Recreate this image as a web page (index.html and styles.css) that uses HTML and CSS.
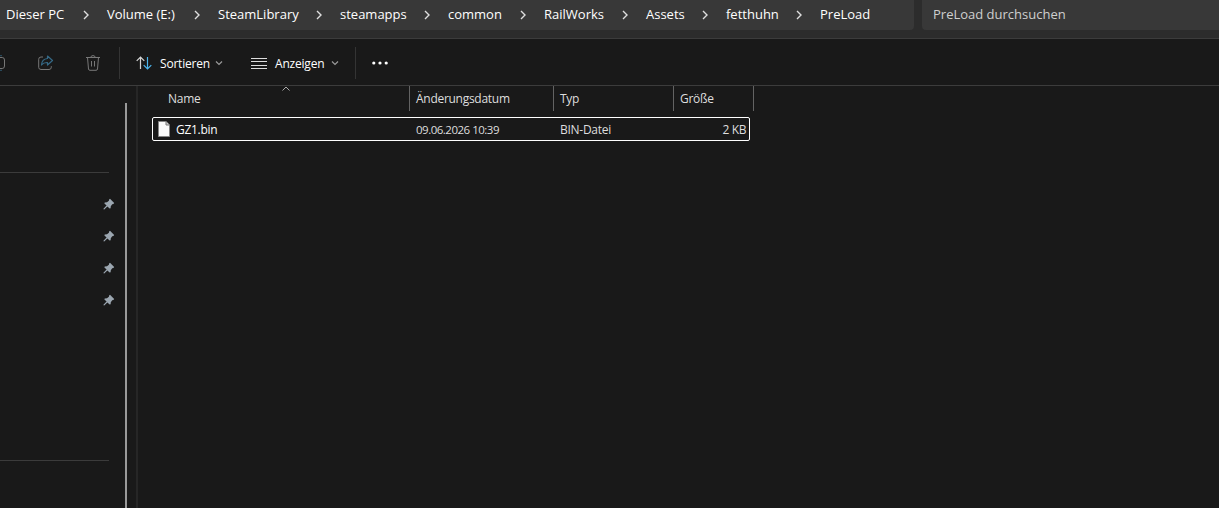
FILE: index.html
```html
<!DOCTYPE html>
<html lang="de">
<head>
<meta charset="utf-8">
<title>PreLoad</title>
<link rel="stylesheet" href="styles.css">
</head>
<body>
<svg width="0" height="0" class="defs">
  <symbol id="chev" viewBox="0 0 8 10"><path d="M2 1l4 4-4 4" fill="none" stroke="#dedede" stroke-width="1.4"/></symbol>
  <symbol id="down" viewBox="0 0 8 6"><path d="M1 1.5l3 3 3-3" fill="none" stroke="#9a9a9a" stroke-width="1.2"/></symbol>
  <symbol id="pin" viewBox="0 0 12 12"><path d="M7 .8L11.2 5 10.4 6 9.2 6.3 7.8 8.2 7.6 10.3 6.6 10.6 4.4 8.4 1.2 11.4.5 11.3.6 10.6 3.6 7.6 1.4 5.4 1.7 4.5 4 4.2 5.9 2.8 6.1 1.6z" fill="#9ba6b0"/></symbol>
</svg>
<div class="window">
  <header class="address">
    <nav class="crumbs">
      <span class="c1">Dieser PC</span><svg><use href="#chev"/></svg>
      <span class="c2">Volume (E:)</span><svg><use href="#chev"/></svg>
      <span class="c3">SteamLibrary</span><svg><use href="#chev"/></svg>
      <span class="c4">steamapps</span><svg><use href="#chev"/></svg>
      <span class="c5">common</span><svg><use href="#chev"/></svg>
      <span class="c6">RailWorks</span><svg><use href="#chev"/></svg>
      <span class="c7">Assets</span><svg><use href="#chev"/></svg>
      <span class="c8">fetthuhn</span><svg><use href="#chev"/></svg>
      <span class="c9">PreLoad</span>
    </nav>
    <div class="search"><span>PreLoad durchsuchen</span></div>
  </header>
  <div class="toolbar">
    <svg class="rename" width="6" height="16" viewBox="0 0 6 16" fill="none"><path d="M0 .7h2M0 15.3h2" stroke="#2d566c"/><path d="M0 2.5h2.2Q4.500 2.500 4.500 5v6q0 2.500-2.300 2.500H0" stroke="#777"/></svg>
    <svg class="share" width="16" height="16" viewBox="0 0 16 16" fill="none"><path d="M5 2H3Q.7 2 .7 4.300v8Q.7 14.500 3 14.500h8q2.300 0 2.300-2.300v-1" stroke="#777"/><path d="M9.500 1l5 4.500-5 4.500V7.500Q5.500 7.300 3.500 10 3.800 4 9.500 3.500z" stroke="#356986" stroke-width="1.200" stroke-linejoin="round"/></svg>
    <svg class="trash" width="16" height="16" viewBox="0 0 16 16" fill="none" stroke="#777"><path d="M1 2.500h14M5.800 2.500Q5.800.6 8 .6t2.200 1.900M2.500 2.500l1 11.500q.1 1.300 1.500 1.300h6q1.400 0 1.500-1.300l1-11.500M6.500 6v5.500M9.500 6v5.500"/></svg>
    <i class="sep"></i>
    <svg class="sort" width="16" height="14" viewBox="0 0 16 14" fill="none" stroke-width="1.200"><path d="M4.500 13V1M.7 4.800L4.500 1l3.800 3.800" stroke="#d5d5d5"/><path d="M11.500 1v12M7.700 9.200l3.800 3.800 3.800-3.800" stroke="#4cb5ed"/></svg>
    <span class="label l1">Sortieren</span><svg class="down"><use href="#down"/></svg>
    <svg class="lines" width="16" height="11" viewBox="0 0 16 11"><path d="M0 .5h16M0 3.500h16M0 7.500h16M0 10.500h16" stroke="#ddd"/></svg>
    <span class="label l2">Anzeigen</span><svg class="down"><use href="#down"/></svg>
    <i class="sep second"></i>
    <svg class="more" width="16" height="4" viewBox="0 0 16 4" fill="#fff"><circle cx="1.800" cy="2" r="1.600"/><circle cx="8" cy="2" r="1.600"/><circle cx="14.200" cy="2" r="1.600"/></svg>
  </div>
  <div class="content">
    <aside class="sidebar">
      <div class="tree">
        <hr>
        <div class="pins">
          <svg><use href="#pin"/></svg><svg><use href="#pin"/></svg><svg><use href="#pin"/></svg><svg><use href="#pin"/></svg>
        </div>
        <hr>
      </div>
      <div class="scroll"></div>
    </aside>
    <main class="files">
      <div class="row head">
        <div class="name"><span class="h1">Name</span><svg class="up" width="8" height="5" viewBox="0 0 8 5"><path d="M.5 4.500L4 1l3.500 3.500" fill="none" stroke="#aaa"/></svg></div>
        <div class="date"><span>Änderungsdatum</span></div>
        <div class="type"><span>Typ</span></div>
        <div class="size"><span>Größe</span></div>
      </div>
      <div class="row file">
        <div class="name"><svg class="doc" width="12" height="16" viewBox="0 0 12 16"><path d="M.5.5h7.500l3.500 3.500v11.500H.5z" fill="#fafafa" stroke="#858585"/><path d="M8 .5V4h3.500" fill="#ccc" stroke="#777"/></svg><span>GZ1.bin</span></div>
        <div class="date"><span class="stamp">09.06.2026 10:39</span></div>
        <div class="type"><span>BIN-Datei</span></div>
        <div class="size"><span class="kb">2 KB</span></div>
      </div>
    </main>
  </div>
</div>
</body>
</html>
```
FILE: styles.css
```css
* { box-sizing: border-box; }
body { margin: 0; background: #191919; color: #fff; font-family: "Open Sans", "Noto Sans", sans-serif; overflow: hidden; }
svg { display: block; flex: none; }
span { white-space: nowrap; }
.defs { position: absolute; }
.window { width: 1219px; height: 508px; display: flex; flex-direction: column; }
.address { height: 39px; flex: none; display: flex; gap: 8px; background: #2c2c2c; border-bottom: 1px solid #3c3c3c; }
.crumbs { width: 914px; height: 30px; padding-left: 6px; display: flex; align-items: center; background: #383838; border-radius: 0 0 4px 0; font-size: 13px; line-height: 28px; }
.crumbs span { flex: none; height: 30px; }
.crumbs svg { width: 8px; height: 10px; margin: 0 17px 1px 16px; }
.c1 { width: 60px; }
.c2 { width: 70px; }
.c3 { width: 81px; }
.c4 { width: 67px; }
.c5 { width: 55px; }
.c6 { width: 61px; }
.c7 { width: 39px; }
.c8 { width: 53px; }
.search { flex: 1; height: 30px; padding-left: 11px; background: #383838; border-radius: 0 0 0 4px; color: #cfcfcf; font-size: 13px; line-height: 28px; }
.toolbar { height: 47px; flex: none; display: flex; align-items: center; border-bottom: 1px solid #3c3c3c; padding-top: 2px; }
.share { margin-left: 32px; }
.trash { margin-left: 31px; }
.sep { width: 1px; height: 32px; margin: -1px 0 0 18px; background: #343434; }
.sort { margin-left: 16px; }
.label { font-size: 12px; font-weight: 500; line-height: 18px; margin-top: 1px; letter-spacing: -.2px; }
.l1 { width: 50px; margin-left: 8px; }
.l2 { width: 51px; margin-left: 8px; }
.down { width: 8px; height: 6px; margin-left: 5px; }
.lines { margin-left: 28px; }
.second { margin-left: 16px; }
.more { margin-left: 16px; }
.content { flex: 1; display: flex; }
.sidebar { width: 138px; display: flex; border-right: 2px solid #262626; }
.tree { width: 125px; padding-top: 86px; }
hr { width: 109px; height: 1px; margin: 0; border: 0; background: #3b3b3b; }
.pins { height: 287px; padding: 25px 0 0 103px; display: flex; flex-direction: column; gap: 20px; }
.pins svg { width: 12px; height: 12px; }
.scroll { width: 2px; margin-top: 17px; background: #999; }
.files { padding-left: 14px; font-size: 12px; letter-spacing: -.28px; line-height: 16px; color: #dedede; }
.row { display: flex; }
.head { height: 25px; }
.head div { border-right: 1px solid #636363; padding: 5px 0 0 6px; }
.head .name { width: 258px; display: flex; padding-left: 16px; }
.date { width: 144px; }
.type { width: 120px; }
.size { width: 80px; }
.up { margin: -5px 0 0 81px; }
.h1 { width: 33px; }
.file { width: 598px; height: 24px; margin-top: 6px; padding-top: 1px; border: 1px solid #fff; border-radius: 2px; align-items: center; }
.file .name { width: 257px; display: flex; align-items: center; padding-left: 5px; gap: 6px; color: #fff; }
.doc { margin: -2px 0 0; }
.file .date, .file .type { padding-left: 6px; }
.file .size { width: 75px; padding-right: 3px; text-align: right; }
.stamp { letter-spacing: -.5px; font-size: 11.5px; }
.kb { letter-spacing: -.4px; }
```
